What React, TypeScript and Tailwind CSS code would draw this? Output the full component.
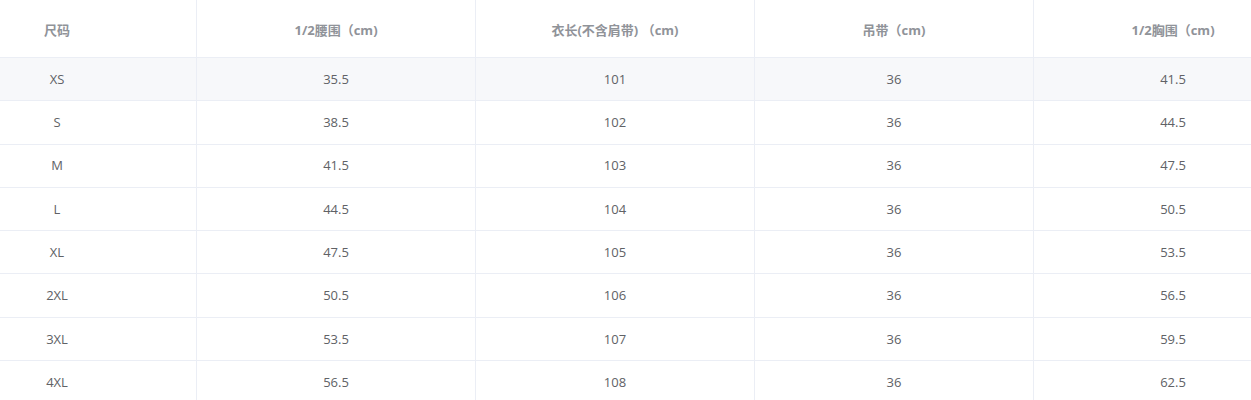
import React from "react";

const headers = ["尺码", "1/2腰围（cm)", "衣长(不含肩带) （cm)", "吊带（cm)", "1/2胸围（cm)"];
const rows = [
  ["XS", "35.5", "101", "36", "41.5"],
  ["S", "38.5", "102", "36", "44.5"],
  ["M", "41.5", "103", "36", "47.5"],
  ["L", "44.5", "104", "36", "50.5"],
  ["XL", "47.5", "105", "36", "53.5"],
  ["2XL", "50.5", "106", "36", "56.5"],
  ["3XL", "53.5", "107", "36", "59.5"],
  ["4XL", "56.5", "108", "36", "62.5"],
];

export default function App() {
  return (
    <div
      className="w-[1251px] h-[400px] overflow-hidden bg-white"
      style={{ fontFamily: '"Open Sans", "Noto Sans CJK SC", sans-serif' }}
    >
      <div className="-ml-[82px] w-[1395px] border-r border-[#ebeef5]">
        <div className="grid grid-cols-[279px_279px_279px_279px_279px] h-[58px] border-b border-[#ebeef5]">
          {headers.map((h, i) => (
            <div
              key={i}
              className="flex items-center justify-center pt-[4px] border-r border-[#ebeef5] text-[13px] font-bold text-[#909399]"
            >
              {h}
            </div>
          ))}
        </div>
        {rows.map((r, ri) => (
          <div
            key={ri}
            className={`grid grid-cols-[279px_279px_279px_279px_279px] h-[43.3px] border-b border-[#ebeef5] ${
              ri === 0 ? "bg-[#f7f8fa]" : "bg-white"
            }`}
          >
            {r.map((c, ci) => (
              <div
                key={ci}
                className="flex items-center justify-center pt-[1px] border-r border-[#ebeef5] text-[13px] text-[#606266]"
              >
                {c}
              </div>
            ))}
          </div>
        ))}
      </div>
    </div>
  );
}
